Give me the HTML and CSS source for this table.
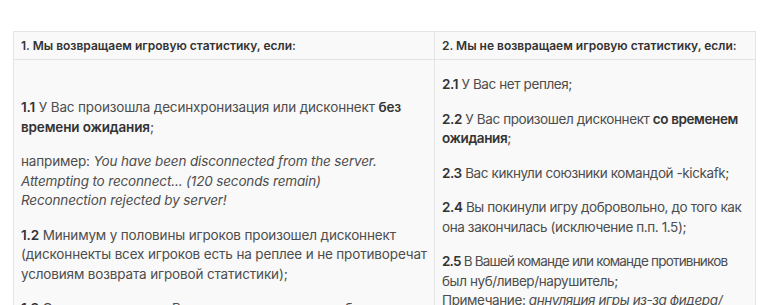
FILE: index.html
```html
<!DOCTYPE html>
<html lang="ru">
<head>
  <meta charset="UTF-8" />
  <meta name="viewport" content="width=device-width, initial-scale=1.0"/>
  <title>Возврат игровой статистики</title>
  <link rel="stylesheet" href="styles.css">
</head>
<body>

  <table class="rules">
    <thead>
      <tr>
        <th class="col-left">1. Мы возвращаем игровую статистику, если:</th>
        <th class="col-right">2. Мы не возвращаем игровую статистику, если:</th>
      </tr>
    </thead>
    <tbody>
      <tr>
        <td class="col-left first-gap">
          <p><b>1.1</b> У Вас произошла десинхронизация или дисконнект <b>без<br>времени ожидания</b>;</p>
          <p>например: <i>You have been disconnected from the server.<br>Attempting to reconnect... (120 seconds remain)<br>Reconnection rejected by server!</i></p>
          <p><b>1.2</b> Минимум у половины игроков произошел дисконнект<br>(дисконнекты всех игроков есть на реплее и не противоречат<br>условиям возврата игровой статистики);</p>
          <p><b>1.3</b> Система засчитала Вам поражение вместо победы;</p>
          <p><b>1.4</b> Игра была прервана из-за технических неполадок;</p>
        </td>
        <td class="col-right">
          <p><b>2.1</b> У Вас нет реплея;</p>
          <p><b>2.2</b> У Вас произошел дисконнект <b>со временем<br>ожидания</b>;</p>
          <p><b>2.3</b> Вас кикнули союзники командой -kickafk;</p>
          <p><b>2.4</b> Вы покинули игру добровольно, до того как<br>она закончилась (исключение п.п. 1.5);</p>
          <p><span class="tight"><b>2.5</b> В Вашей команде или команде противников</span><br>был нуб/ливер/нарушитель;<br>Примечание: <i class="note">аннуляция игры из-за фидера/<br>ливера не производится;</i></p>
        </td>
      </tr>
    </tbody>
  </table>

</body>
</html>
```

FILE: styles.css
```css
:root {
  --text: #4d4d4d;
  --strong: #333;
  --cell-bg: #f9f9f9;
  --border: #e4e4e4;
}

* {
  box-sizing: border-box;
}

body {
  margin: 0;
  padding: 31px 13px 0;
  background: #fff;
  font-family: 'Inter', sans-serif;
  color: var(--text);
}

table.rules {
  width: 743px;
  table-layout: fixed;
  border-collapse: collapse;
  background: var(--cell-bg);
  border: 1px solid var(--border);
}

.rules th,
.rules td {
  border: 1px solid var(--border);
  vertical-align: top;
  text-align: left;
  padding: 0 7px;
  overflow: hidden;
}

.col-left {
  width: 421px;
}

.rules th {
  font-size: 12px;
  font-weight: 600;
  color: var(--strong);
  line-height: 14px;
  padding-top: 7px;
  padding-bottom: 6px;
}

.rules td {
  font-size: 13.5px;
  line-height: 19.5px;
  letter-spacing: -0.15px;
}

.rules td.col-right {
  letter-spacing: -0.4px;
}

.rules td p {
  margin: 15px 0;
  white-space: nowrap;
}

.rules td.first-gap p:first-child {
  margin-top: 38px;
}

.rules b {
  font-weight: 600;
  color: var(--strong);
}

.rules td .tight {
  letter-spacing: -0.8px;
}

.note {
  text-decoration: underline;
}
```
